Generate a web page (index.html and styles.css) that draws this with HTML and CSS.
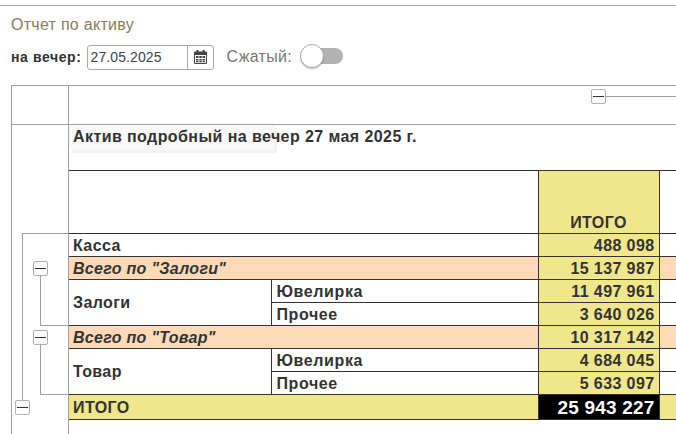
FILE: index.html
```html
<!DOCTYPE html>
<html lang="ru">
<head>
<meta charset="utf-8">
<title>Отчет по активу</title>
<link rel="stylesheet" href="styles.css">
</head>
<body>
<div class="page">
  <h1 class="title">Отчет по активу</h1>
  <form class="filters">
    <label class="date-label" for="date">на вечер:</label>
    <div class="date-group">
      <input class="date-input" id="date" value="27.05.2025">
      <span class="date-addon">
        <svg width="13" height="14" viewBox="0 0 13 14"><path fill="#444" d="M2.500 0h2v1.500h4V0h2v1.500H12a1 1 0 0 1 1 1V13a1 1 0 0 1-1 1H1a1 1 0 0 1-1-1V2.500a1 1 0 0 1 1-1h1.500zM1 5v8h11V5z"/><path fill="#444" d="M2 6h2.500v2H2zM5.300 6h2.500v2H5.300zM8.600 6h2.500v2H8.600zM2 9h2.500v1.500H2zM5.300 9h2.500v1.500H5.300zM8.600 9h2.500v1.500H8.600zM2 11h2.500v1.300H2zM5.300 11h2.500v1.300H5.300zM8.600 11h2.500v1.300H8.600z"/></svg>
      </span>
    </div>
    <span class="toggle-label">Сжатый:</span>
    <span class="toggle"><span class="toggle-knob"></span></span>
  </form>
  <div class="grid">
    <div class="gutter top"></div>
    <div class="main top">
      <span class="col-outline"><span class="outline-btn"></span><span class="outline-line"></span></span>
    </div>
    <div class="gutter body-gutter">
      <span class="tree-v v-outer"></span>
      <span class="tree-h h-outer"></span>
      <span class="outline-btn b-outer"></span>
      <span class="outline-btn b-zalogi"></span>
      <span class="tree-v v-zalogi"></span>
      <span class="tree-h h-zalogi"></span>
      <span class="outline-btn b-tovar"></span>
      <span class="tree-v v-tovar"></span>
      <span class="tree-h h-tovar"></span>
    </div>
    <div class="main sheet">
      <h2 class="sheet-title">Актив подробный на вечер 27 мая 2025 г.</h2>
      <table class="report">
        <colgroup><col class="c1"><col class="c2"><col class="c3"><col class="c4"></colgroup>
        <tr class="head"><th colspan="2"></th><th class="tot">ИТОГО</th><th></th></tr>
        <tr><td colspan="2" class="lbl">Касса</td><td class="num">488 098</td><td></td></tr>
        <tr class="sub"><td colspan="2" class="lbl">Всего по "Залоги"</td><td class="num">15 137 987</td><td></td></tr>
        <tr><td rowspan="2" class="lbl">Залоги</td><td class="lbl leaf">Ювелирка</td><td class="num">11 497 961</td><td></td></tr>
        <tr><td class="lbl leaf">Прочее</td><td class="num">3 640 026</td><td></td></tr>
        <tr class="sub"><td colspan="2" class="lbl">Всего по "Товар"</td><td class="num">10 317 142</td><td></td></tr>
        <tr><td rowspan="2" class="lbl">Товар</td><td class="lbl leaf">Ювелирка</td><td class="num">4 684 045</td><td></td></tr>
        <tr><td class="lbl leaf">Прочее</td><td class="num">5 633 097</td><td></td></tr>
        <tr class="grand"><td colspan="2" class="lbl">ИТОГО</td><td class="num black">25 943 227</td><td></td></tr>
      </table>
    </div>
  </div>
</div>
</body>
</html>
```

FILE: styles.css
```css
html, body {
  margin: 0;
  height: 100%;
  overflow: hidden;
  background: #fff;
}
.page {
  width: 676px;
  height: 434px;
  overflow: hidden;
  box-sizing: border-box;
  border-top: 1px solid #aaa;
  margin-top: 5px;
  font-family: "Liberation Sans", Arial, sans-serif;
  color: #333;
}
.title {
  margin: 10px 0 0 11px;
  font-size: 16px;
  line-height: 18px;
  font-weight: 400;
  letter-spacing: .28px;
  color: #8b7d5f;
}
.filters {
  display: flex;
  align-items: center;
  margin: 10px 0 0 11px;
  height: 26px;
}
.date-label {
  font-size: 14px;
  font-weight: 700;
  letter-spacing: .6px;
  color: #333;
  margin-right: 5px;
}
.date-group {
  display: flex;
  height: 25px;
  width: 127px;
  box-sizing: border-box;
  border: 1px solid #aaa;
  border-radius: 3px;
}
.date-input {
  width: 100px;
  box-sizing: border-box;
  border: 0;
  border-right: 1px solid #aaa;
  padding: 0 3px;
  font: 14px "Liberation Sans", Arial, sans-serif;
  letter-spacing: .1px;
  color: #444;
  outline: none;
  background: transparent;
}
.date-addon {
  flex: 1;
  display: flex;
  align-items: center;
  justify-content: center;
}
.toggle-label {
  margin-left: 13px;
  font-size: 16px;
  letter-spacing: .3px;
  color: #777;
}
.toggle {
  position: relative;
  display: block;
  margin: 0 0 2px 8px;
  width: 43px;
  height: 16px;
  background: linear-gradient(to right, transparent 10px, #b2b2b2 10px);
  border-radius: 0 8px 8px 0;
}
.toggle-knob {
  position: absolute;
  left: 0;
  top: -4px;
  width: 24px;
  height: 24px;
  box-sizing: border-box;
  border: 1px solid #aaa;
  border-radius: 50%;
  background: #fff;
  box-shadow: 0 1px 1px rgba(0,0,0,.25);
}
.grid {
  display: grid;
  grid-template-columns: 57px 1fr;
  grid-template-rows: 39px 1fr;
  margin: 15px 0 0 11px;
  height: 349px;
  border-top: 1px solid #a0a0a0;
  border-left: 1px solid #a0a0a0;
  box-sizing: border-box;
}
.gutter {
  position: relative;
  border-right: 1px solid #a0a0a0;
}
.gutter.top, .main.top {
  border-bottom: 1px solid #a0a0a0;
}
.main {
  position: relative;
  min-width: 0;
  z-index: 0;
}
.col-outline {
  position: absolute;
  left: 522px;
  top: 3px;
  right: 0;
  display: flex;
  align-items: center;
}
.outline-btn {
  display: block;
  box-sizing: border-box;
  width: 15px;
  height: 15px;
  border: 1px solid #b0b0b0;
  border-radius: 2px;
  background: linear-gradient(#333, #333) center 6px / 11px 1px no-repeat, #fff;
  flex: none;
}
.outline-line {
  flex: 1;
  height: 1px;
  background: #a0a0a0;
}
.tree-v, .tree-h, .body-gutter .outline-btn {
  position: absolute;
}
.tree-v { width: 1px; background: #a0a0a0; }
.tree-h { height: 1px; background: #a0a0a0; }
.v-outer { left: 10px; top: 108px; height: 168px; }
.h-outer { left: 10px; top: 108px; width: 46px; }
.b-outer { left: 3px; top: 275px; }
.b-zalogi { left: 21px; top: 136px; }
.v-zalogi { left: 28px; top: 150px; height: 50px; }
.h-zalogi { left: 28px; top: 200px; width: 28px; }
.b-tovar { left: 21px; top: 205px; }
.v-tovar { left: 28px; top: 219px; height: 50px; }
.h-tovar { left: 28px; top: 269px; width: 28px; }
.sheet-title {
  margin: 0;
  height: 45px;
  box-sizing: border-box;
  padding: 2px 0 0 4px;
  font-size: 16px;
  line-height: 20px;
  font-weight: 700;
  letter-spacing: .42px;
  color: #333;
  white-space: nowrap;
  position: relative;
}
.sheet-title::before {
  content: "";
  position: absolute;
  z-index: -1;
  left: 0;
  top: 0;
  width: 205px;
  height: 25px;
  background: #f9f9f9;
  box-shadow: 3px 3px 0 #f3f3f3;
}
.report {
  border-collapse: collapse;
  table-layout: fixed;
  width: 620px;
  font-size: 16px;
  font-weight: 700;
  letter-spacing: .4px;
  color: #333;
}
.c1 { width: 202px; }
.c2 { width: 267px; }
.c3 { width: 121px; }
.report td, .report th {
  border: 1px solid #333;
  padding: 1px 4px 0;
  height: 21px;
  line-height: 18px;
  white-space: nowrap;
  overflow: hidden;
}
.report tr > :first-child { border-left: 0; }
.report tr > :last-child { border-right: 0; }
.report .head th { height: 61px; padding: 0 4px 1px; vertical-align: bottom; font-weight: 700; }
.head .tot { background: #f0e68c; text-align: center; }
.num { background: #f0e68c; text-align: right; }
.lbl { text-align: left; }
.report .leaf { padding-left: 5px; letter-spacing: .6px; }
.sub td { background: #ffdab9; }
.sub .lbl { font-style: italic; letter-spacing: .3px; }
.report .sub .num { background: #f0e68c; }
.report .grand td { background: #f0e68c; height: 23px; }
.report .grand td.black { background: #000; color: #fff; font-size: 19px; letter-spacing: .2px; }
```
